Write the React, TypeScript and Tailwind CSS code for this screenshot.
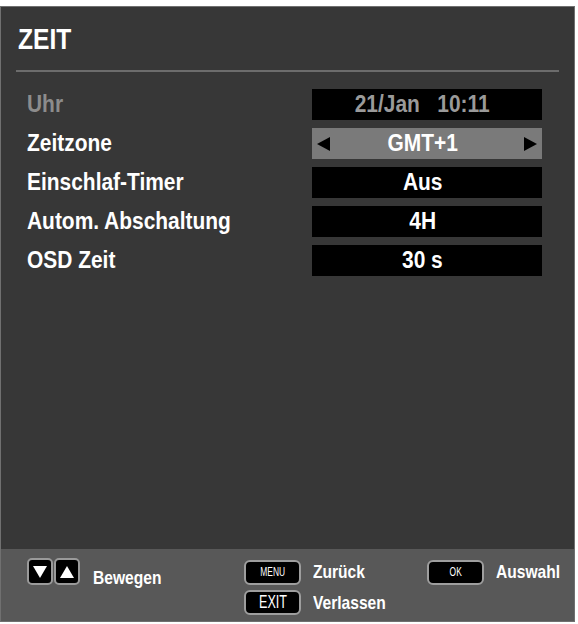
import React from 'react';

// TV-OSD "ZEIT" Menü — dunkles Panel mit Einstellungszeilen und Tastenleiste unten
// Schrift: Liberation Sans, horizontal gestaucht (≈ Arial Narrow)

const FONT = "font-['Liberation_Sans',Arial,sans-serif]";

type Row = { label: string; value: string; dim?: boolean; active?: boolean };

const ROWS: Row[] = [
  { label: 'Uhr', value: '21/Jan\u00a0\u00a0\u00a010:11', dim: true },
  { label: 'Zeitzone', value: 'GMT+1', active: true },
  { label: 'Einschlaf-Timer', value: 'Aus' },
  { label: 'Autom. Abschaltung', value: '4H' },
  { label: 'OSD Zeit', value: '30 s' },
];

function Narrow({ children, center, wide }: { children: React.ReactNode; center?: boolean; wide?: boolean }) {
  return (
    <span
      className={`inline-block whitespace-nowrap ${wide ? 'scale-x-[0.91]' : 'scale-x-[0.82]'} ${center ? 'origin-center' : 'origin-left'}`}
    >
      {children}
    </span>
  );
}

function Tri({ dir }: { dir: 'left' | 'right' }) {
  return (
    <svg width="16" height="16" viewBox="0 0 16 16" className="shrink-0">
      {dir === 'left' ? <path d="M1 8 L14 1 L14 15 Z" fill="#000" /> : <path d="M15 8 L2 1 L2 15 Z" fill="#000" />}
    </svg>
  );
}

function ArrowKey({ up }: { up?: boolean }) {
  return (
    <div className="w-[26px] h-[27px] rounded-[5px] border-2 border-[#9a9a9a] bg-black flex items-center justify-center">
      <svg width="16" height="14" viewBox="0 0 16 14">
        {up ? <path d="M8 1 L15 13 L1 13 Z" fill="#fff" /> : <path d="M1 1 L15 1 L8 13 Z" fill="#fff" />}
      </svg>
    </div>
  );
}

function Key({ label, small }: { label: string; small?: boolean }) {
  return (
    <div
      className={`w-[57px] h-[25px] rounded-[6px] border-2 border-[#9e9e9e] bg-black flex items-center justify-center text-white font-normal ${small ? 'text-[12px]' : 'text-[18px]'}`}
    >
      <span className="inline-block scale-x-[0.7] origin-center">{label}</span>
    </div>
  );
}

export default function App() {
  return (
    <div className="w-[578px] h-[624px] bg-white pt-[6px]">
      <div className={`w-[575px] h-[616px] border border-[#707070] bg-[#373737] flex flex-col ${FONT}`}>
        {/* Titel */}
        <div className="pl-[17px] pt-[17px] h-[63px] text-white font-bold text-[30px] leading-[30px]">
          <Narrow>ZEIT</Narrow>
        </div>
        <div className="mx-[15px] h-[2px] bg-[#6c6c6c]" />

        {/* Einstellungen */}
        <div className="flex flex-col gap-[8px] pt-[17px]">
          {ROWS.map((r) => (
            <div key={r.label} className="flex items-center h-[31px]">
              <div className={`pl-[26px] w-[311px] font-bold text-[23px] ${r.dim ? 'text-[#8c8c8c]' : 'text-white'}`}>
                <Narrow wide>{r.label}</Narrow>
              </div>
              <div
                className={`w-[230px] h-[31px] flex items-center px-[4px] ${r.active ? 'bg-[#7a7a7a]' : 'bg-black'}`}
              >
                {r.active ? <Tri dir="left" /> : <span className="w-[16px]" />}
                <span
                  className={`flex-1 text-center pr-[9px] font-bold text-[23px] ${r.dim ? 'text-[#9a9a9a]' : 'text-white'}`}
                >
                  <Narrow center wide>
                    {r.value}
                  </Narrow>
                </span>
                {r.active ? <Tri dir="right" /> : <span className="w-[16px]" />}
              </div>
            </div>
          ))}
        </div>

        <div className="flex-1" />

        {/* Tastenleiste */}
        <div className="h-[72px] bg-[#585858] flex items-start pt-[9px] text-white font-bold text-[19px]">
          <div className="flex items-start pl-[26px] w-[245px]">
            <div className="flex gap-[1px]">
              <ArrowKey />
              <ArrowKey up />
            </div>
            <span className="ml-[13px] mt-[6px]">
              <Narrow>Bewegen</Narrow>
            </span>
          </div>
          <div className="flex flex-col gap-[2px] w-[184px]">
            <div className="flex items-center">
              <Key label="MENU" small />
              <span className="ml-[12px]">
                <Narrow>Zurück</Narrow>
              </span>
            </div>
            <div className="flex items-center">
              <Key label="EXIT" />
              <span className="ml-[12px]">
                <Narrow>Verlassen</Narrow>
              </span>
            </div>
          </div>
          <div className="flex items-center">
            <Key label="OK" small />
            <span className="ml-[12px]">
              <Narrow>Auswahl</Narrow>
            </span>
          </div>
        </div>
      </div>
    </div>
  );
}
